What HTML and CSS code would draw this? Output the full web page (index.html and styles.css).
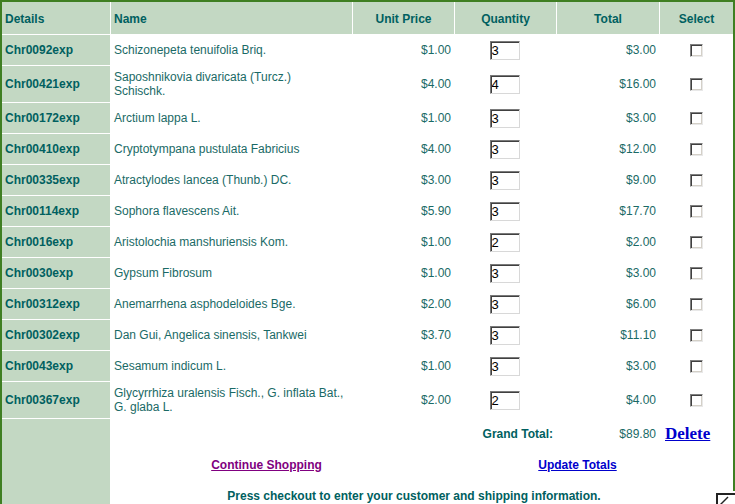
FILE: index.html
```html
<!DOCTYPE html>
<html>
<head>
<meta charset="utf-8">
<title>Shopping Cart</title>
<link rel="stylesheet" href="styles.css">
</head>
<body>
<div class="cart">
<table class="grid">
<colgroup>
<col class="c-det"><col class="c-name"><col class="c-unit"><col class="c-qty"><col class="c-tot"><col class="c-sel">
</colgroup>
<thead>
<tr class="head">
<th class="left">Details</th>
<th class="left">Name</th>
<th>Unit Price</th>
<th>Quantity</th>
<th>Total</th>
<th>Select</th>
</tr>
</thead>
<tbody>
<tr><td class="det">Chr0092exp</td><td class="name">Schizonepeta tenuifolia Briq.</td><td class="num">$1.00</td><td class="qty"><input class="qbox" type="text" value="3"></td><td class="num">$3.00</td><td class="sel"><input class="chk" type="checkbox"></td></tr>
<tr class="tall"><td class="det">Chr00421exp</td><td class="name">Saposhnikovia divaricata (Turcz.)<br>Schischk.</td><td class="num">$4.00</td><td class="qty"><input class="qbox" type="text" value="4"></td><td class="num">$16.00</td><td class="sel"><input class="chk" type="checkbox"></td></tr>
<tr><td class="det">Chr00172exp</td><td class="name">Arctium lappa L.</td><td class="num">$1.00</td><td class="qty"><input class="qbox" type="text" value="3"></td><td class="num">$3.00</td><td class="sel"><input class="chk" type="checkbox"></td></tr>
<tr><td class="det">Chr00410exp</td><td class="name">Cryptotympana pustulata Fabricius</td><td class="num">$4.00</td><td class="qty"><input class="qbox" type="text" value="3"></td><td class="num">$12.00</td><td class="sel"><input class="chk" type="checkbox"></td></tr>
<tr><td class="det">Chr00335exp</td><td class="name">Atractylodes lancea (Thunb.) DC.</td><td class="num">$3.00</td><td class="qty"><input class="qbox" type="text" value="3"></td><td class="num">$9.00</td><td class="sel"><input class="chk" type="checkbox"></td></tr>
<tr><td class="det">Chr00114exp</td><td class="name">Sophora flavescens Ait.</td><td class="num">$5.90</td><td class="qty"><input class="qbox" type="text" value="3"></td><td class="num">$17.70</td><td class="sel"><input class="chk" type="checkbox"></td></tr>
<tr><td class="det">Chr0016exp</td><td class="name">Aristolochia manshuriensis Kom.</td><td class="num">$1.00</td><td class="qty"><input class="qbox" type="text" value="2"></td><td class="num">$2.00</td><td class="sel"><input class="chk" type="checkbox"></td></tr>
<tr><td class="det">Chr0030exp</td><td class="name">Gypsum Fibrosum</td><td class="num">$1.00</td><td class="qty"><input class="qbox" type="text" value="3"></td><td class="num">$3.00</td><td class="sel"><input class="chk" type="checkbox"></td></tr>
<tr><td class="det">Chr00312exp</td><td class="name">Anemarrhena asphodeloides Bge.</td><td class="num">$2.00</td><td class="qty"><input class="qbox" type="text" value="3"></td><td class="num">$6.00</td><td class="sel"><input class="chk" type="checkbox"></td></tr>
<tr><td class="det">Chr00302exp</td><td class="name">Dan Gui, Angelica sinensis, Tankwei</td><td class="num">$3.70</td><td class="qty"><input class="qbox" type="text" value="3"></td><td class="num">$11.10</td><td class="sel"><input class="chk" type="checkbox"></td></tr>
<tr><td class="det">Chr0043exp</td><td class="name">Sesamum indicum L.</td><td class="num">$1.00</td><td class="qty"><input class="qbox" type="text" value="3"></td><td class="num">$3.00</td><td class="sel"><input class="chk" type="checkbox"></td></tr>
<tr class="tall"><td class="det">Chr00367exp</td><td class="name">Glycyrrhiza uralensis Fisch., G. inflata Bat.,<br>G. glaba L.</td><td class="num">$2.00</td><td class="qty"><input class="qbox" type="text" value="2"></td><td class="num">$4.00</td><td class="sel"><input class="chk" type="checkbox"></td></tr>
<tr class="foot">
<td class="det" rowspan="4"></td>
<td class="blank" colspan="2"></td>
<td class="gt">Grand Total:</td>
<td class="num blank">$89.80</td>
<td class="blank del-cell"><a class="del" href="#">Delete</a></td>
</tr>
<tr class="foot">
<td class="blank" colspan="5">
<div class="actions">
<a class="act visited" href="#">Continue Shopping</a>
<a class="act" href="#">Update Totals</a>
</div>
</td>
</tr>
<tr class="foot">
<td class="blank note" colspan="5">Press checkout to enter your customer and shipping information.</td>
</tr>
<tr class="foot">
<td class="blank" colspan="5"></td>
</tr>
</tbody>
</table>
<div class="broken" aria-hidden="true">
<svg width="22" height="14" viewBox="0 0 22 14"><path d="M1 14V1H22" fill="none" stroke="#222" stroke-width="2"/><path d="M3 13L12 4" stroke="#222" stroke-width="1.5"/></svg>
</div>
</div>
</body>
</html>
```
FILE: styles.css
```css
html, body {
  margin: 0;
  padding: 0;
  background: #ffffff;
  overflow: hidden;
}
body {
  font-family: "Liberation Sans", Arial, sans-serif;
  font-size: 12px;
  color: #006060;
}
.cart {
  position: relative;
  width: 731px;
  border: 2px solid #3f7f22;
  border-bottom: none;
  height: 560px;
}
.grid {
  table-layout: fixed;
  width: 733px;
  margin: -1px;
  border-collapse: separate;
  border-spacing: 1px;
}
.c-det { width: 108px; }
.c-name { width: 241px; }
.c-unit { width: 101px; }
.c-qty { width: 101px; }
.c-tot { width: 102px; }
.c-sel { width: 73px; }
th, td {
  padding: 0 3px;
  line-height: 14px;
}
.head th {
  background: #c3d8c3;
  height: 32px;
  padding-top: 2px;
  box-sizing: border-box;
  font-weight: bold;
  color: #006060;
  text-align: center;
}
.head th.left { text-align: left; }
tbody tr { height: 30px; }
tbody tr.tall { height: 36px; }
td.det {
  background: #c3d8c3;
  font-weight: bold;
  color: #006060;
}
td.name { color: #1a6a66; }
td.num { text-align: right; color: #1a6a66; }
td.qty { text-align: center; }
td.sel { text-align: center; }
.qbox {
  box-sizing: border-box;
  width: 30px;
  height: 19px;
  margin: 0 2px 0 0;
  padding: 0 0 0 1px;
  font-family: "Liberation Sans", Arial, sans-serif;
  font-size: 13px;
  color: #000;
  background: #fff;
  border: 1px solid;
  border-color: #7a7a7a #d8d8d8 #d8d8d8 #7a7a7a;
  box-shadow: inset 1px 1px 0 #404040;
  vertical-align: middle;
  outline: none;
}
.chk {
  appearance: none;
  -webkit-appearance: none;
  box-sizing: border-box;
  width: 13px;
  height: 13px;
  margin: 0;
  background: #fff;
  border: 1px solid;
  border-color: #808080 #e8e8e8 #e8e8e8 #808080;
  box-shadow: inset 1px 1px 0 #404040, inset -1px -1px 0 #d4d0c8;
  vertical-align: middle;
}
tr.foot { height: 30px; }
td.gt {
  text-align: right;
  font-weight: bold;
  color: #006060;
}
.del-cell { padding-left: 5px; }
.del {
  font-family: "Liberation Serif", "Times New Roman", serif;
  font-size: 17px;
  font-weight: bold;
  color: #0000cc;
  text-decoration: underline;
}
.actions {
  display: grid;
  grid-template-columns: 1fr 1fr;
  margin: 0 -3px;
}
.act {
  text-align: center;
  font-weight: bold;
  color: #0000cc;
  text-decoration: underline;
}
.act.visited { color: #800080; }
td.note {
  text-align: center;
  font-weight: bold;
  color: #006060;
  padding-right: 19px;
}
.broken {
  position: absolute;
  left: 711px;
  top: 489px;
  width: 24px;
  height: 16px;
  background: #fff;
  padding: 2px 0 0 3px;
  box-sizing: border-box;
}
.broken svg { display: block; }
```
